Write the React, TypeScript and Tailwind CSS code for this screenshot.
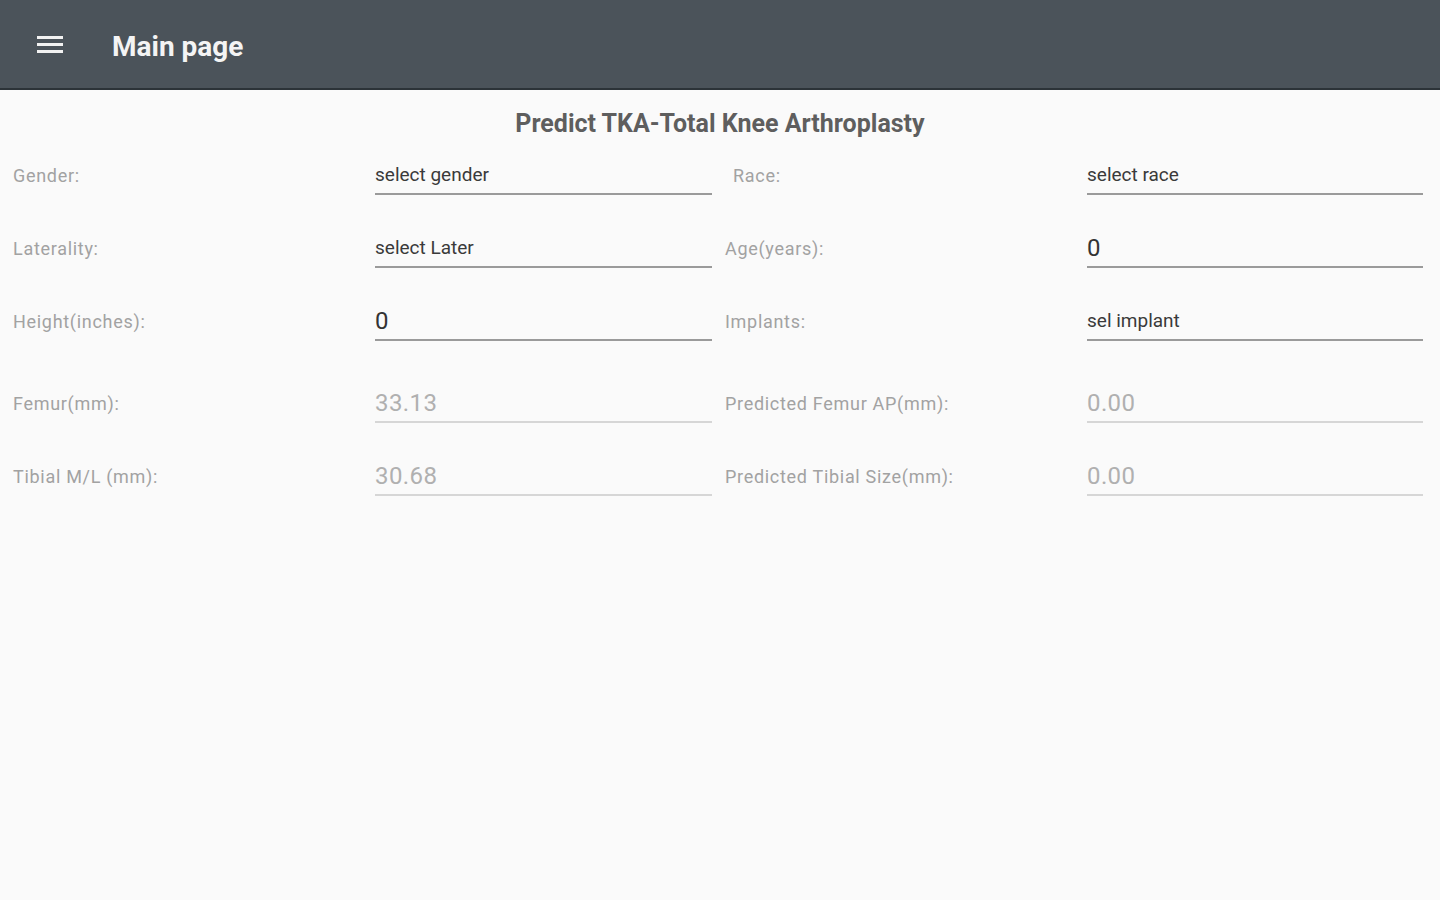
import React from 'react';

type Row = {
  label: string;
  value: string;
  kind: 'select' | 'input' | 'readonly';
  rightLabel: string;
  rightValue: string;
  rightKind: 'select' | 'input' | 'readonly';
  gap: string;
  rightIndent?: boolean;
};

const rows: Row[] = [
  { label: 'Gender:', value: 'select gender', kind: 'select', rightLabel: 'Race:', rightValue: 'select race', rightKind: 'select', gap: 'mt-[18px]', rightIndent: true },
  { label: 'Laterality:', value: 'select Later', kind: 'select', rightLabel: 'Age(years):', rightValue: '0', rightKind: 'input', gap: 'mt-[36px]' },
  { label: 'Height(inches):', value: '0', kind: 'input', rightLabel: 'Implants:', rightValue: 'sel implant', rightKind: 'select', gap: 'mt-[36px]' },
  { label: 'Femur(mm):', value: '33.13', kind: 'readonly', rightLabel: 'Predicted Femur AP(mm):', rightValue: '0.00', rightKind: 'readonly', gap: 'mt-[45px]' },
  { label: 'Tibial M/L (mm):', value: '30.68', kind: 'readonly', rightLabel: 'Predicted Tibial Size(mm):', rightValue: '0.00', rightKind: 'readonly', gap: 'mt-[36px]' },
];

const Field = ({ value, kind }: { value: string; kind: Row['kind'] }) => {
  const text =
    kind === 'select'
      ? 'text-[19px] text-[#3a3a3a]'
      : kind === 'input'
      ? 'text-[24px] text-[#333333] tracking-[0.4px]'
      : 'text-[24px] text-[#b0b0b0] tracking-[0.4px]';
  const line = kind === 'readonly' ? 'border-[#d6d6d6]' : 'border-[#9a9a9a]';
  return (
    <div className={`h-[37px] flex items-center border-b-2 ${line}`}>
      <span className={`${text} leading-none mt-[-2px]`}>{value}</span>
    </div>
  );
};

const Label = ({ text, indent }: { text: string; indent?: boolean }) => (
  <div className={`flex items-center text-[18px] text-[#a2a2a2] tracking-[0.7px] mt-[-2px] ${indent ? 'pl-[21px]' : 'pl-[13px]'}`}>
    {text}
  </div>
);

export default function App() {
  return (
    <div className="min-h-[900px] w-[1440px] bg-[#fafafa]" style={{ fontFamily: 'Roboto, "Noto Sans", sans-serif' }}>
      <header className="h-[90px] bg-[#4b535a] border-b-2 border-[#2c3338] flex items-center">
        <div className="ml-[37px] w-[26px] flex flex-col gap-[4px]">
          <span className="h-[3px] bg-[#f2f2f2]" />
          <span className="h-[3px] bg-[#f2f2f2]" />
          <span className="h-[3px] bg-[#f2f2f2]" />
        </div>
        <h1 className="ml-[49px] text-[28px] font-bold text-[#f4f4f4] mt-[6px]">Main page</h1>
      </header>
      <main className="pt-[18px]">
        <h2 className="text-center text-[25px] leading-[32px] font-bold text-[#5e5e5e]">
          Predict TKA-Total Knee Arthroplasty
        </h2>
        {rows.map((r) => (
          <div key={r.label} className={`grid grid-cols-[375px_337px_375px_336px] ${r.gap}`}>
            <Label text={r.label} />
            <Field value={r.value} kind={r.kind} />
            <Label text={r.rightLabel} indent={r.rightIndent} />
            <Field value={r.rightValue} kind={r.rightKind} />
          </div>
        ))}
      </main>
    </div>
  );
}
